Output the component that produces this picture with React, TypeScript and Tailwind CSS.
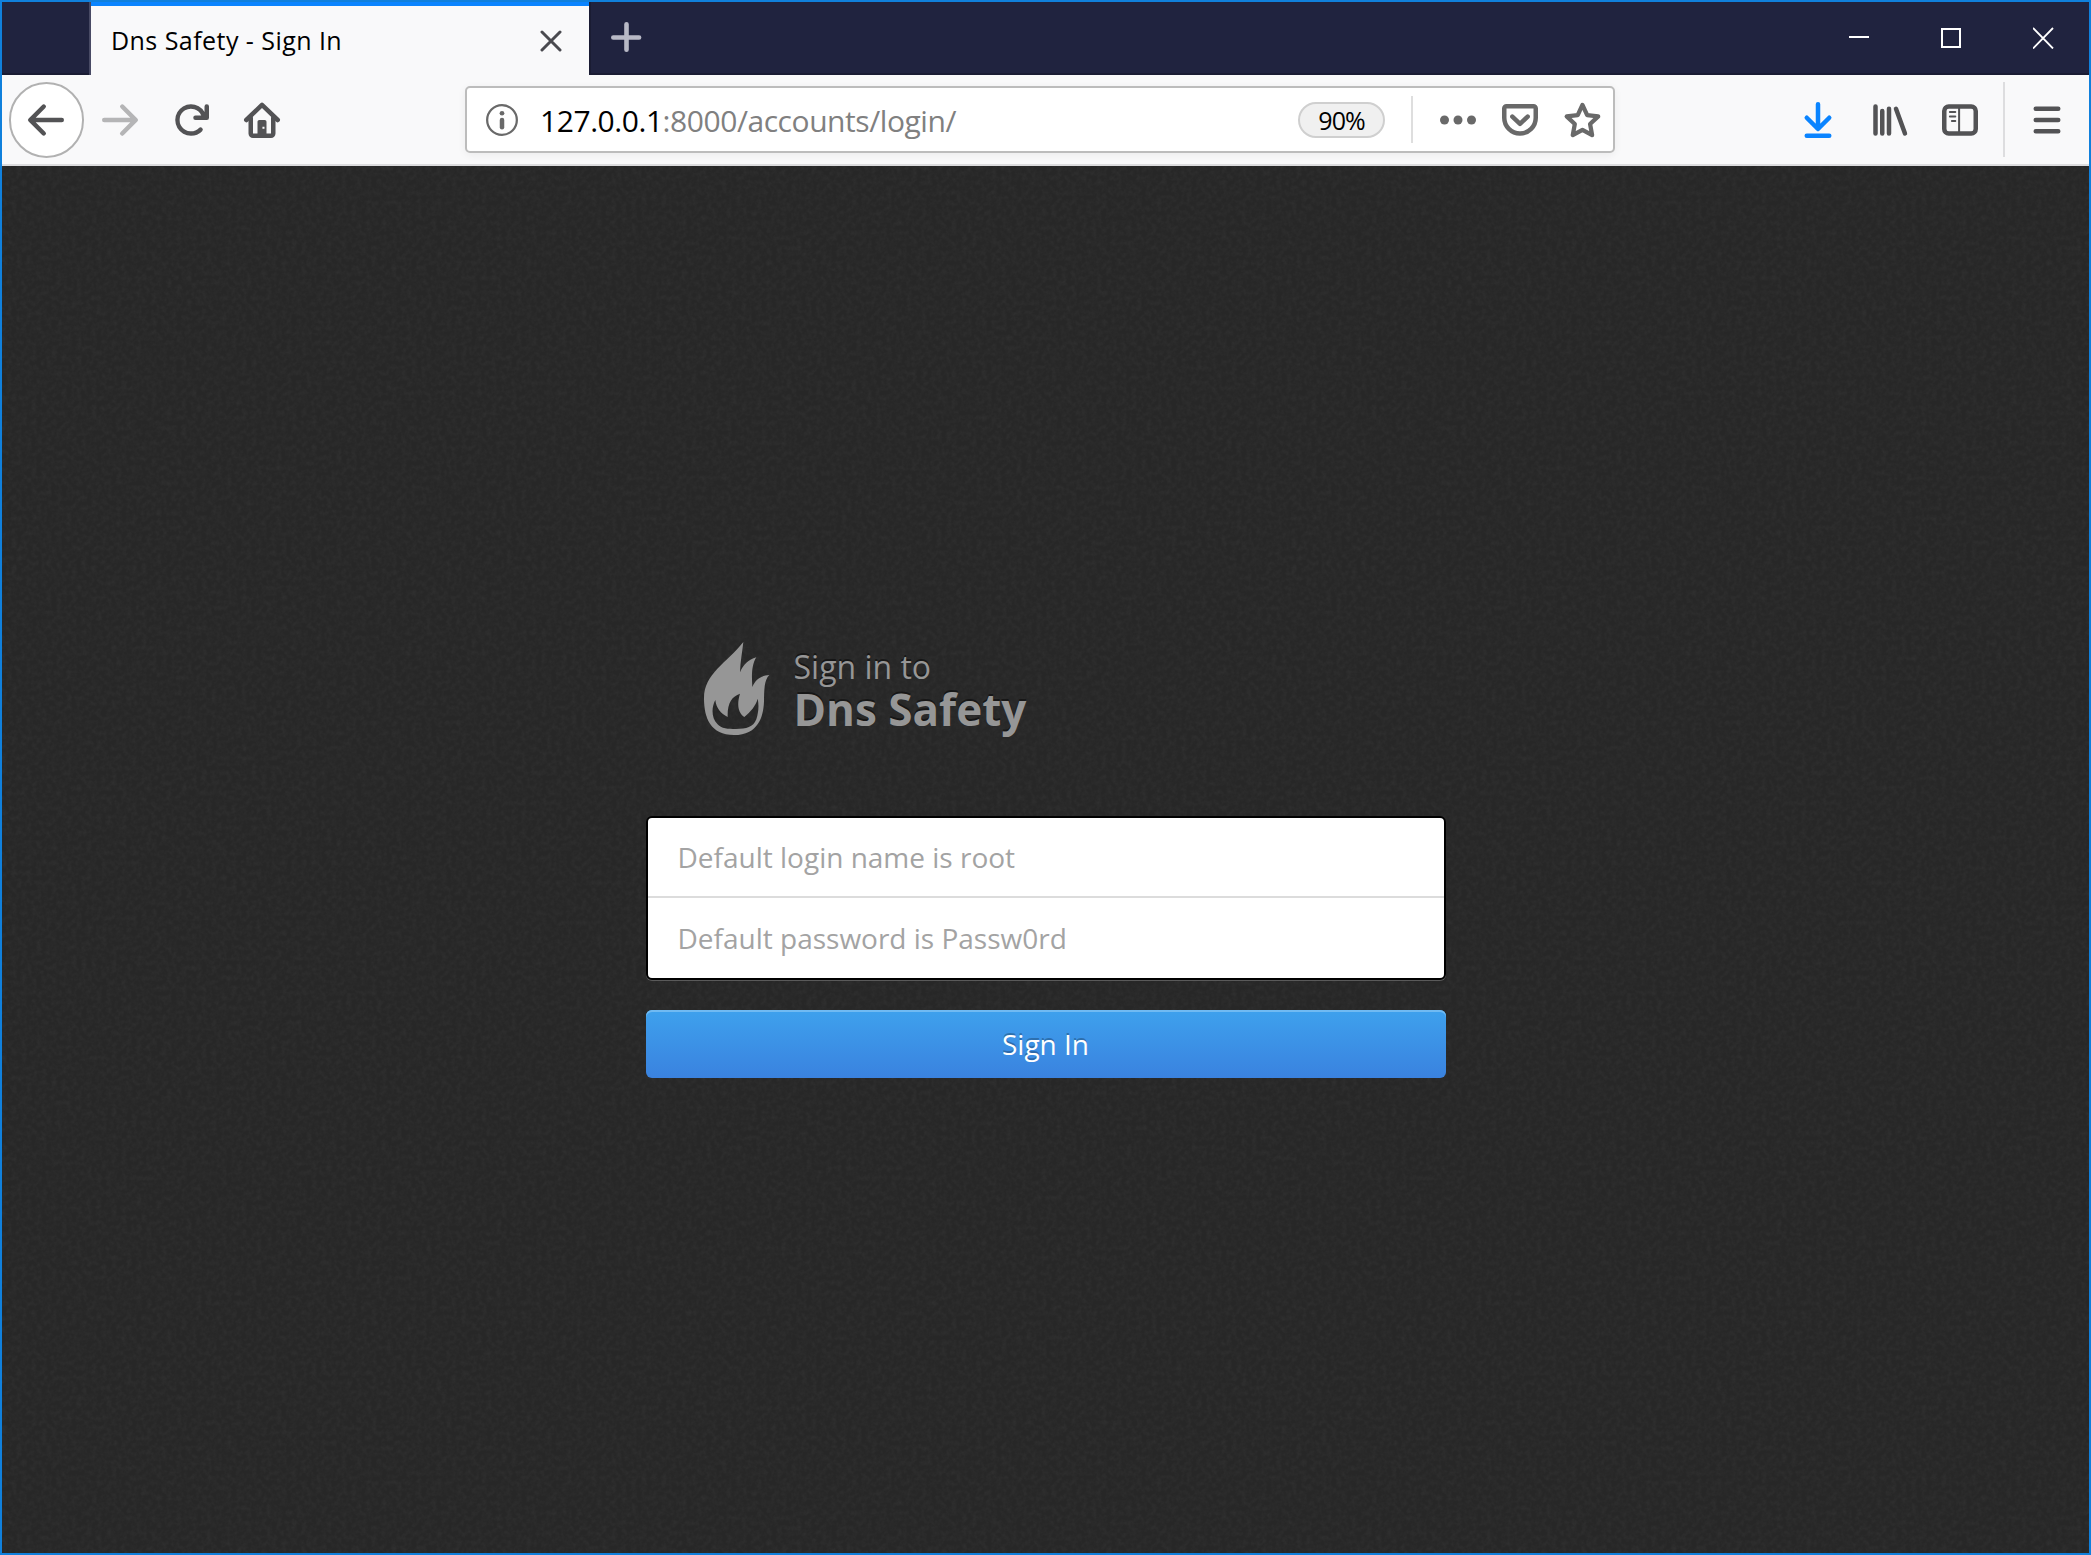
import React from "react";

type IconProps = { className?: string; children: React.ReactNode };

/* 16-unit toolbar glyph, drawn at 36px */
function Icon({ className = "", children }: IconProps) {
  return (
    <svg
      viewBox="0 0 16 16"
      className={`h-9 w-9 shrink-0 overflow-visible ${className}`}
      fill="none"
      stroke="currentColor"
      strokeWidth="2"
      strokeLinecap="round"
      strokeLinejoin="round"
    >
      {children}
    </svg>
  );
}

function TabStrip() {
  return (
    <div className="flex h-[73px] bg-[#20233f]">
      <div className="w-[87px] border-b-2 border-[#1a1c33]" />
      <div className="w-[2px] bg-[#484a64]" />
      <div className="flex w-[498px] items-center border-t-4 border-[#0a84ff] bg-[#f9f9fa] pl-[20px] pr-[27px]">
        <span className="mb-[2px] grow whitespace-pre text-[25px] leading-9 tracking-[0.45px] text-black">
          Dns Safety - Sign In
        </span>
        <svg viewBox="0 0 22 22" className="h-[22px] w-[22px]" stroke="#4a4a4f" strokeWidth="3" strokeLinecap="round">
          <path d="M2 2l18 18M20 2L2 20" />
        </svg>
      </div>
      <div className="flex grow border-b-2 border-l-2 border-[#1a1c33]">
        <svg viewBox="0 0 32 32" className="ml-[19px] mt-[19px] h-8 w-8" stroke="#b8b9c6" strokeWidth="4.6" strokeLinecap="round">
          <path d="M16.5 3.3v25.4M3.3 16.5h25.8" />
        </svg>
        <div className="ml-auto flex pr-[35px] pt-[25px] text-white">
          <div className="mr-[72px] mt-[9px] h-[2px] w-5 bg-white" />
          <div className="mr-[72px] mt-px h-5 w-5 border-2 border-white" />
          <svg viewBox="0 0 21 22" className="h-[22px] w-[21px]" stroke="currentColor" strokeWidth="1.8">
            <path d="M0 1l20 20.500M20 1L0 21.500" />
          </svg>
        </div>
      </div>
    </div>
  );
}

function UrlBar() {
  return (
    <div className="ml-[185px] flex h-[67px] w-[1150px] items-center rounded-[5px] border-2 border-[#bcbcbc] bg-white pl-[17px] text-[#696969] shadow-[0_2px_8px_rgba(0,0,0,0.06)]">
      <Icon>
        <circle cx="8" cy="8" r="6.600" strokeWidth="1" />
        <circle cx="8" cy="5" r="1.050" fill="currentColor" stroke="none" />
        <path d="M8 8v3.200" />
      </Icon>
      <span className="ml-[20px] mt-[3px] grow whitespace-pre text-[30px] leading-10 tracking-[-0.44px] text-[#808080]">
        <span className="text-black">127.0.0.1</span>:8000/accounts/login/
      </span>
      <div className="flex h-9 w-[87px] items-center justify-center rounded-full border-2 border-[#cfcfcf] bg-[#f0f0f0] text-[25px] leading-8 tracking-[-1px] text-black">
        90%
      </div>
      <div className="ml-[26px] h-[47px] w-[2px] bg-[#dedede]" />
      <Icon className="ml-[27px]">
        <g fill="currentColor" stroke="none">
          <circle cx="2" cy="8" r="2" />
          <circle cx="8" cy="8" r="2" />
          <circle cx="14" cy="8" r="2" />
        </g>
      </Icon>
      <Icon className="ml-[26px]">
        <path d="M2 1.900h12a1 1 0 0 1 1 1V7a7 7 0 0 1-14 0V2.900a1 1 0 0 1 1-1z" />
        <path d="M4.600 6.500L8 9.700l3.400-3.200" />
      </Icon>
      <Icon className="ml-[26px] mr-[13px]">
        <path d="M8.200 1.300l2.100 4.500 4.900.6-3.600 3.400.9 4.900L8.200 12.400l-4.300 2.300.9-4.900L1.200 6.400l4.900-.6z" strokeWidth="1.900" />
      </Icon>
    </div>
  );
}

function Toolbar() {
  return (
    <div className="flex h-[91px] items-center border-b-2 border-[#dcdcde] bg-[#f9f9fa] pl-[7px] text-[#535355]">
      <div className="flex h-[76px] w-[75px] items-center justify-center rounded-full border-2 border-[#b1b1b1] bg-white">
        <Icon className="mr-px">
          <path
            d="M15 7H3.414l4.293-4.293a1 1 0 0 0-1.414-1.414l-6 6a1 1 0 0 0 0 1.414l6 6a1 1 0 0 0 1.414-1.414L3.414 9H15a1 1 0 0 0 0-2z"
            fill="currentColor"
            stroke="none"
          />
        </Icon>
      </div>
      <Icon className="ml-[18px] text-[#b5b5b6]">
        <path
          d="M15.707 7.293l-6-6a1 1 0 0 0-1.414 1.414L12.586 7H1a1 1 0 0 0 0 2h11.586l-4.293 4.293a1 1 0 1 0 1.414 1.414l6-6a1 1 0 0 0 0-1.414z"
          fill="currentColor"
          stroke="none"
        />
      </Icon>
      <Icon className="ml-[35px]">
        <path
          d="M15 1a1 1 0 0 0-1 1v2.418A6.995 6.995 0 1 0 8 15a6.954 6.954 0 0 0 4.950-2.050 1 1 0 0 0-1.414-1.414A5.019 5.019 0 1 1 12.549 6H10a1 1 0 0 0 0 2h5a1 1 0 0 0 1-1V2a1 1 0 0 0-1-1z"
          fill="currentColor"
          stroke="none"
        />
      </Icon>
      <Icon className="ml-[35px]">
        <path d="M1 8l7-6.700L15 8" />
        <path d="M3 7v7a1 1 0 0 0 1 1h8a1 1 0 0 0 1-1V7" />
        <rect x="6" y="8" width="4" height="7" rx=".8" fill="currentColor" stroke="none" />
        <rect x="8.200" y="11" width=".9" height=".9" fill="#f9f9fa" stroke="none" />
      </Icon>
      <UrlBar />
      <Icon className="ml-[185px] text-[#0a84ff]">
        <path d="M8 1v10.800M3 7l5 5 5-5M3 15h10" />
      </Icon>
      <Icon className="ml-[35px]">
        <path d="M2 2v12M5 4v10M8 3v11M11.100 3l4 11" />
      </Icon>
      <Icon className="ml-[35px]">
        <rect x="1" y="2" width="14" height="12" rx="2" />
        <path d="M7.600 2.500v11" strokeWidth=".9" />
        <path d="M3.500 4.400h2.400M3.500 6.400h2.400M4.400 8.400h1.500" strokeWidth=".9" />
      </Icon>
      <div className="ml-[25px] h-[75px] w-[2px] bg-[#dddddf]" />
      <Icon className="ml-[24px]">
        <path d="M3 3h10M3 8h10M3 13h10" />
      </Icon>
    </div>
  );
}

function Texture() {
  return (
    <svg className="pointer-events-none absolute inset-0 h-full w-full opacity-[0.035]" aria-hidden="true">
      <filter id="grain" x="0" y="0" width="100%" height="100%" colorInterpolationFilters="sRGB">
        <feTurbulence type="fractalNoise" baseFrequency="0.2" numOctaves="3" seed="4" />
        <feColorMatrix type="matrix" values="1.500 0 0 0 -0.55  1.500 0 0 0 -0.55  1.500 0 0 0 -0.55  0 0 0 0 1" />
      </filter>
      <rect width="100%" height="100%" filter="url(#grain)" />
    </svg>
  );
}

function Flame() {
  return (
    <svg viewBox="69 60 201 288" className="h-24 w-[67px]" fill="#969696">
      <path
        fillRule="evenodd"
        d="M190 66C187 95 181 125 180 157C190 135 205 118 229 112C214 135 215 170 217 201C226 180 240 167 268 165C252 180 253 210 252 245C250 290 235 345 162 345C92 345 72 295 72 235C72 160 140 130 190 66Z
           M106 240C94 262 94 295 112 312C124 326 145 327 167 327C200 327 219 322 229 298C236 275 237 255 233 236C227 258 212 275 193 291C174 278 170 254 180 221C156 229 142 248 143 291C122 280 109 265 106 240Z"
      />
    </svg>
  );
}

function LoginPage() {
  return (
    <main className="relative flex grow justify-center overflow-hidden bg-[#292929] font-['Open_Sans',sans-serif]">
      <Texture />
      <div className="relative mt-[474px] w-[800px]">
        <header className="flex pl-[57px] text-[#969696]">
          <Flame />
          <div className="ml-[24px] mt-[7px] whitespace-nowrap [text-shadow:0_-2px_0_rgba(0,0,0,0.45)]">
            <div className="text-[32px] leading-10">Sign in to</div>
            <h1 className="text-[44px] font-bold leading-[44px]">Dns Safety</h1>
          </div>
        </header>
        <form className="mt-[80px]">
          <div className="h-[164px] rounded-[6px] border-2 border-black bg-white text-[28px] leading-10 text-[#a3a3a3] shadow-[0_1px_0_#5a5a5a]">
            <div className="flex h-20 items-center border-b-2 border-[#dcdcdc] pl-[30px]">Default login name is root</div>
            <div className="flex h-20 items-center pl-[30px]">Default password is Passw0rd</div>
          </div>
          <button
            type="button"
            className="mt-[30px] flex h-[68px] w-full items-center justify-center rounded-[6px] bg-linear-to-b from-[#3ea1ed] to-[#3a82df] text-[28px] leading-10 text-white shadow-[inset_0_2px_0_#70baf2] [text-shadow:0_-2px_0_rgba(0,0,0,0.25)]"
          >
            Sign In
          </button>
        </form>
      </div>
    </main>
  );
}

export default function App() {
  return (
    <div className="flex h-[1555px] w-[2091px] flex-col overflow-hidden border-2 border-[#1080dc] font-['Open_Sans',sans-serif]">
      <TabStrip />
      <Toolbar />
      <LoginPage />
    </div>
  );
}
